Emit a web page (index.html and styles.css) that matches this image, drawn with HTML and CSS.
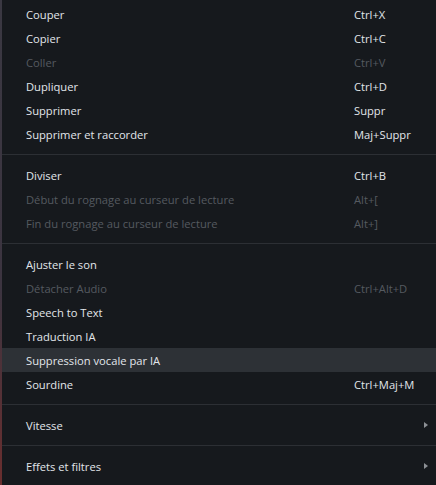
FILE: index.html
```html
<!DOCTYPE html>
<html lang="fr">
<head>
<meta charset="utf-8">
<title>Menu</title>
<link rel="stylesheet" href="styles.css">
</head>
<body>
<div class="page">
  <div class="edge"></div>
  <div class="menu">
    <div class="section">
      <div class="item"><span class="label">Couper</span><span class="key">Ctrl+X</span></div>
      <div class="item"><span class="label">Copier</span><span class="key">Ctrl+C</span></div>
      <div class="item disabled"><span class="label">Coller</span><span class="key">Ctrl+V</span></div>
      <div class="item"><span class="label">Dupliquer</span><span class="key">Ctrl+D</span></div>
      <div class="item"><span class="label">Supprimer</span><span class="key">Suppr</span></div>
      <div class="item"><span class="label">Supprimer et raccorder</span><span class="key">Maj+Suppr</span></div>
    </div>
    <div class="sep"></div>
    <div class="section">
      <div class="item"><span class="label">Diviser</span><span class="key">Ctrl+B</span></div>
      <div class="item disabled"><span class="label">Début du rognage au curseur de lecture</span><span class="key">Alt+[</span></div>
      <div class="item disabled"><span class="label">Fin du rognage au curseur de lecture</span><span class="key">Alt+]</span></div>
    </div>
    <div class="sep"></div>
    <div class="section">
      <div class="item"><span class="label">Ajuster le son</span><span class="key"></span></div>
      <div class="item disabled"><span class="label">Détacher Audio</span><span class="key">Ctrl+Alt+D</span></div>
      <div class="item"><span class="label">Speech to Text</span><span class="key"></span></div>
      <div class="item"><span class="label">Traduction IA</span><span class="key"></span></div>
      <div class="item hover"><span class="label">Suppression vocale par IA</span><span class="key"></span></div>
      <div class="item"><span class="label">Sourdine</span><span class="key">Ctrl+Maj+M</span></div>
    </div>
    <div class="sep"></div>
    <div class="section">
      <div class="item sub"><span class="label">Vitesse</span><span class="arrow"></span></div>
    </div>
    <div class="sep"></div>
    <div class="section">
      <div class="item sub"><span class="label">Effets et filtres</span><span class="arrow"></span></div>
    </div>
  </div>
</div>
</body>
</html>
```

FILE: styles.css
```css
html, body {
  margin: 0;
  padding: 0;
  background: #16191d;
}
body {
  width: 436px;
  height: 485px;
  overflow: hidden;
  font-family: "Open Sans", "Noto Sans", "DejaVu Sans", sans-serif;
  font-size: 11.2px;
}
.page {
  display: flex;
  height: 485px;
}
.edge {
  width: 2px;
  flex: none;
  background: linear-gradient(to bottom, #3a3842 0%, #3c3440 60%, #6a2e2e 100%);
}
.menu {
  flex: 1;
  background: #16191d;
  padding-top: 2px;
  display: flex;
  flex-direction: column;
}
.item {
  height: 24px;
  display: flex;
  align-items: center;
  color: #e2e6eb;
  padding-left: 24px;
}
.item.disabled {
  color: #555a60;
}
.item.hover {
  background: #2d3136;
}
.label {
  flex: 1;
  white-space: nowrap;
}
.key {
  width: 82px;
  flex: none;
  white-space: nowrap;
}
.sep {
  height: 1px;
  background: #2c2f34;
  margin: 8px 0;
}
.arrow {
  width: 0;
  height: 0;
  border-top: 3px solid transparent;
  border-bottom: 3px solid transparent;
  border-left: 4px solid #8c9095;
  margin-right: 8px;
}
```
